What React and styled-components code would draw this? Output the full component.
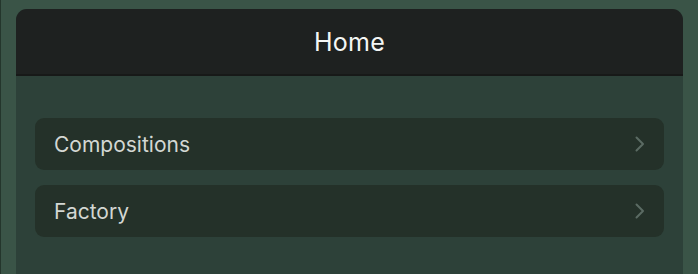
import React from "react";
import styled, { createGlobalStyle } from "styled-components";

const Global = createGlobalStyle`
  html, body { margin: 0; padding: 0; background: #3a5447; }
  body { font-family: Inter, "Noto Sans", sans-serif; }
  #root { height: 274px; overflow: hidden; }
`;

const Page = styled.div`
  box-sizing: border-box;
  height: 274px;
  padding: 9px 15px 0 15px;
  background: #3a5447;
  border-left: 1px solid #24362c;
  display: flex;
  flex-direction: column;
`;

const Panel = styled.div`
  flex: 1;
  display: flex;
  flex-direction: column;
  background: #2d4139;
  border-radius: 11px 11px 0 0;
  overflow: hidden;
`;

const Header = styled.header`
  height: 67px;
  background: #1e2120;
  border-bottom: 2px solid #171918;
  display: flex;
  align-items: center;
  justify-content: center;
  color: #f4f6f4;
  font-size: 25px;
  font-weight: 400;
  letter-spacing: 0.2px;
  box-sizing: border-box;
`;

const List = styled.div`
  display: flex;
  flex-direction: column;
  gap: 15px;
  padding: 42px 19px 0 19px;
`;

const Row = styled.div`
  height: 52px;
  box-sizing: border-box;
  background: #243129;
  border-radius: 9px;
  display: flex;
  align-items: center;
  justify-content: space-between;
  padding: 0 19px 0 19px;
  color: #d3d7d3;
  font-size: 21px;
`;

const Chevron = () => (
  <svg width="10" height="16" viewBox="0 0 10 16" fill="none">
    <path d="M1.5 1.5 L8 8 L1.5 14.5" stroke="#5b6b63" strokeWidth="2" strokeLinecap="round" strokeLinejoin="round" />
  </svg>
);

export default function App() {
  return (
    <>
      <Global />
      <Page>
        <Panel>
          <Header>Home</Header>
          <List>
            <Row>
              <span>Compositions</span>
              <Chevron />
            </Row>
            <Row>
              <span>Factory</span>
              <Chevron />
            </Row>
          </List>
        </Panel>
      </Page>
    </>
  );
}
